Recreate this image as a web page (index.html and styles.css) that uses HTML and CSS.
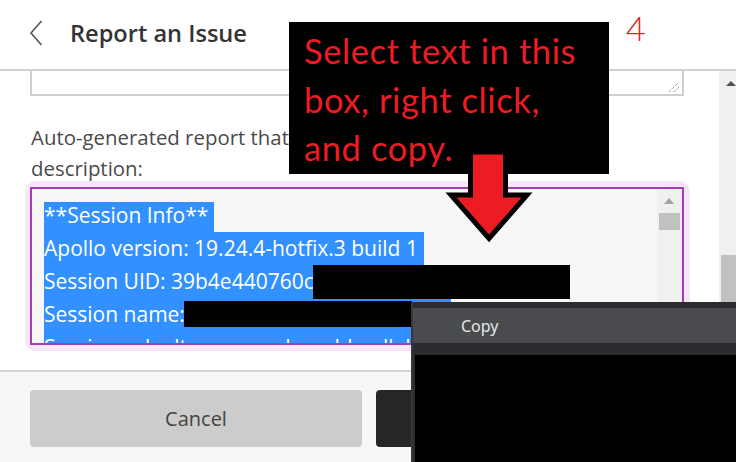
FILE: index.html
```html
<!DOCTYPE html>
<html lang="en">
<head>
<meta charset="utf-8">
<title>Report an Issue</title>
<link rel="stylesheet" href="styles.css">
</head>
<body>
<div class="app">
  <header class="header">
    <svg class="back" width="14" height="28" viewBox="0 0 14 28" aria-hidden="true">
      <polyline points="12.5,2 2,14 12.5,26" fill="none" stroke="#555" stroke-width="1.6"/>
    </svg>
    <h1 class="title">Report an Issue</h1>
  </header>

  <div class="main">
    <div class="scroll">
      <div class="stub">
        <svg class="grip" width="12" height="12" viewBox="0 0 12 12" aria-hidden="true">
          <line x1="1" y1="11" x2="11" y2="1" stroke="#777" stroke-width="1" stroke-dasharray="1 1"/>
          <line x1="6" y1="11" x2="11" y2="6" stroke="#777" stroke-width="1" stroke-dasharray="1 1"/>
        </svg>
      </div>
      <p class="label">Auto-generated report that will be attached to your<br>description:</p>
      <div class="ta-ring">
        <div class="ta">
          <div class="ta-text">
            <div class="ta-line l1">**Session Info**</div>
            <div class="ta-line l2">Apollo version: 19.24.4-hotfix.3 build 1</div>
            <div class="ta-line l3">Session UID: 39b4e440760c</div>
            <div class="ta-line l4">Session name:</div>
            <div class="ta-line l5">Session url: ultra-us-prod-sas.bbcollab.c 131</div>
          </div>
          <div class="ta-scroll">
            <div class="ta-arrow"></div>
            <div class="ta-thumb"></div>
          </div>
        </div>
      </div>
    </div>
    <div class="vscroll">
      <div class="v-arrow"></div>
      <div class="v-thumb"></div>
    </div>
  </div>

  <footer class="footer">
    <button class="btn cancel">Cancel</button>
    <button class="btn next">Submit</button>
  </footer>

  <div class="redact r1"></div>
  <div class="redact r2"></div>

  <div class="menu">
    <div class="menu-item">Copy</div>
    <div class="menu-redact"></div>
  </div>

  <div class="note">Select text in this<br>box, right click,<br>and copy.</div>

  <svg class="arrow" width="100" height="110" viewBox="440 145 100 110" aria-hidden="true">
    <polygon points="470.5,152 505.5,152 505.5,195 527,195 489,238.5 451,195 470.5,195" fill="#ed1c24" stroke="#000" stroke-width="5" stroke-linejoin="miter"/>
  </svg>

  <div class="step">4</div>
</div>
</body>
</html>
```

FILE: styles.css
```css
* { box-sizing: border-box; }

body {
  margin: 0;
  font-family: "Open Sans", "Noto Sans", sans-serif;
  background: #fff;
}

.app {
  position: relative;
  width: 736px;
  height: 462px;
  overflow: hidden;
  display: flex;
  flex-direction: column;
  background: #fff;
}

/* header */
.header {
  height: 71px;
  flex: none;
  display: flex;
  align-items: center;
  gap: 27px;
  padding: 0 0 3px 29px;
  border-bottom: 2px solid #d0d0d0;
}
.back { display: block; }
.title {
  margin: 0;
  font-size: 23.6px;
  font-weight: 600;
  color: #333;
}

/* main */
.main {
  flex: 1;
  min-height: 0;
  display: flex;
}
.scroll {
  flex: 1;
  overflow: hidden;
  padding-left: 30px;
}
.stub {
  position: relative;
  width: 654px;
  height: 25px;
  border: 2px solid #cfcfcf;
  border-top: none;
}
.grip {
  position: absolute;
  right: 2px;
  bottom: 1px;
}
.label {
  margin: 26px 0 0 1px;
  font-size: 20.4px;
  line-height: 31px;
  color: #4a4a4a;
}
.ta-ring {
  margin: -3px 0 0 -5px;
  width: 665px;
  height: 170px;
  padding: 6px 6px 6px 5px;
  background: #f6e7f6;
  border-radius: 10px;
}
.ta {
  height: 100%;
  display: flex;
  border: 2px solid #a93bb9;
  background: #f7f7f7;
}
.ta-text {
  flex: 1;
  overflow: hidden;
  padding: 10px 0 0 12px;
  font-size: 21px;
  line-height: 33px;
  color: #fff;
}
.ta-line {
  height: 33px;
  background: #3390ff;
  white-space: nowrap;
  overflow: hidden;
}
.l1 { width: 170px; background: linear-gradient(transparent 3px, #3390ff 3px); }
.l2 { width: 380px; }
.l3 { width: 507px; }
.l4 { width: 407px; }
.l5 { width: 560px; }

.ta-scroll {
  flex: none;
  width: 25px;
  background: #f0f0f0;
  padding: 9px 0 0 2px;
}
.ta-arrow {
  width: 0;
  height: 0;
  margin-left: 5px;
  border-left: 5.5px solid transparent;
  border-right: 5.5px solid transparent;
  border-bottom: 6px solid #a3a3a3;
}
.ta-thumb {
  margin-top: 9px;
  width: 21px;
  height: 17px;
  background: #c1c1c1;
}

.vscroll {
  flex: none;
  width: 17px;
  background: #f0f0f0;
  display: flex;
  flex-direction: column;
}
.v-arrow {
  width: 0;
  height: 0;
  margin: 10px 0 0 7px;
  border-left: 5px solid transparent;
  border-right: 5px solid transparent;
  border-bottom: 5px solid #505050;
}
.v-thumb {
  margin: auto 0 0 2px;
  height: 115px;
  background: #c1c1c1;
}

/* footer */
.footer {
  flex: none;
  height: 92px;
  display: flex;
  gap: 14px;
  padding: 18px 0 0 30px;
  border-top: 2px solid #d4d4d4;
  background: #f7f7f7;
}
.btn {
  width: 332px;
  height: 57px;
  border: none;
  border-radius: 4px;
  font-family: inherit;
  font-size: 20px;
}
.cancel { background: #cccccc; color: #444; }
.next { background: #262626; color: #fff; }

/* overlays */
.redact {
  position: absolute;
  background: #000;
}
.r1 { left: 313px; top: 265px; width: 257px; height: 34px; }
.r2 { left: 184px; top: 301px; width: 228px; height: 26px; }

.menu {
  position: absolute;
  left: 411px;
  top: 302px;
  right: 0;
  bottom: 0;
  display: flex;
  flex-direction: column;
  padding-top: 6px;
  background: #2b2c30;
  border-left: 2px solid #37383c;
}
.menu-item {
  height: 35px;
  display: flex;
  align-items: center;
  padding-left: 48px;
  background: #4a4b4f;
  color: #e6e6e6;
  font-family: "Noto Sans", sans-serif;
  font-size: 16px;
}
.menu-redact {
  flex: 1;
  margin: 12px 0 0 2px;
  background: #000;
}

.note {
  position: absolute;
  left: 289px;
  top: 22px;
  width: 320px;
  height: 152px;
  padding: 5px 0 0 15px;
  background: #000;
  color: #ed1c24;
  font-family: Lato, sans-serif;
  font-size: 34.5px;
  line-height: 48.5px;
  letter-spacing: 0.6px;
}

.arrow {
  position: absolute;
  left: 440px;
  top: 145px;
}

.step {
  position: absolute;
  left: 626px;
  top: 7px;
  font-family: Lato, sans-serif;
  font-weight: 300;
  font-size: 34px;
  color: #ed1c24;
}
```
